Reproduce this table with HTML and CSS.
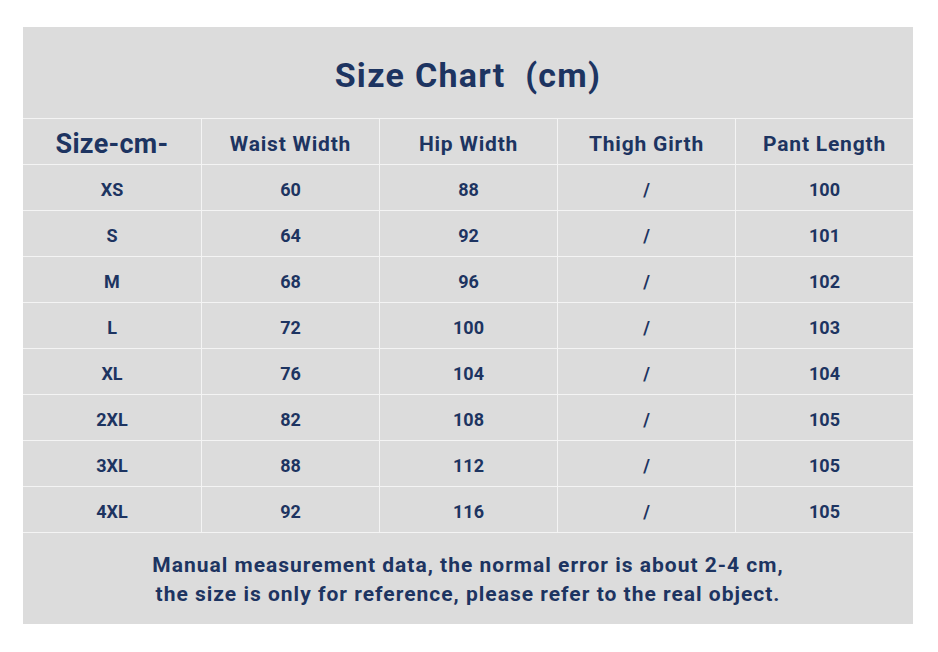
FILE: index.html
```html
<!DOCTYPE html>
<html>
<head>
<meta charset="utf-8">
<link rel="stylesheet" href="styles.css">
</head>
<body>
<div class="chart">
  <div class="title">Size Chart&nbsp;&nbsp;(cm)</div>
  <div class="grid">
    <div class="cell head first">Size-cm-</div>
    <div class="cell head">Waist Width</div>
    <div class="cell head">Hip Width</div>
    <div class="cell head">Thigh Girth</div>
    <div class="cell head last">Pant Length</div>

    <div class="cell">XS</div><div class="cell">60</div><div class="cell">88</div><div class="cell">/</div><div class="cell last">100</div>
    <div class="cell">S</div><div class="cell">64</div><div class="cell">92</div><div class="cell">/</div><div class="cell last">101</div>
    <div class="cell">M</div><div class="cell">68</div><div class="cell">96</div><div class="cell">/</div><div class="cell last">102</div>
    <div class="cell">L</div><div class="cell">72</div><div class="cell">100</div><div class="cell">/</div><div class="cell last">103</div>
    <div class="cell">XL</div><div class="cell">76</div><div class="cell">104</div><div class="cell">/</div><div class="cell last">104</div>
    <div class="cell">2XL</div><div class="cell">82</div><div class="cell">108</div><div class="cell">/</div><div class="cell last">105</div>
    <div class="cell">3XL</div><div class="cell">88</div><div class="cell">112</div><div class="cell">/</div><div class="cell last">105</div>
    <div class="cell">4XL</div><div class="cell">92</div><div class="cell">116</div><div class="cell">/</div><div class="cell last">105</div>
  </div>
  <div class="note">Manual measurement data, the normal error is about 2-4 cm,<br>the size is only for reference, please refer to the real object.</div>
</div>
</body>
</html>
```
FILE: styles.css
```css
html, body {
  margin: 0;
  padding: 0;
  background: #ffffff;
}
body {
  padding: 27px 0 0 23px;
  font-family: Roboto, "Liberation Sans", sans-serif;
  color: #1d3461;
  font-weight: 700;
}
.chart {
  width: 890px;
  height: 597px;
  background: #dcdcdc;
  display: flex;
  flex-direction: column;
}
.title {
  height: 92px;
  border-bottom: 1px solid #f4f4f4;
  display: flex;
  align-items: center;
  justify-content: center;
  font-size: 34px;
  letter-spacing: 1.3px;
  padding-top: 4px;
  box-sizing: border-box;
}
.grid {
  display: grid;
  grid-template-columns: 179px 178px 178px 178px 177px;
  grid-auto-rows: 46px;
}
.cell {
  display: flex;
  align-items: center;
  justify-content: center;
  font-size: 18px;
  padding-top: 4px;
  border-right: 1px solid #f4f4f4;
  border-bottom: 1px solid #f4f4f4;
  box-sizing: border-box;
}
.cell.last {
  border-right: none;
}
.cell.head {
  font-size: 21px;
  letter-spacing: 0.8px;
}
.cell.head.first {
  font-size: 27px;
  letter-spacing: 0.3px;
}
.note {
  flex: 1;
  display: flex;
  align-items: center;
  justify-content: center;
  text-align: center;
  font-size: 21px;
  line-height: 29px;
  letter-spacing: 1px;
  padding-top: 3px;
}
```
